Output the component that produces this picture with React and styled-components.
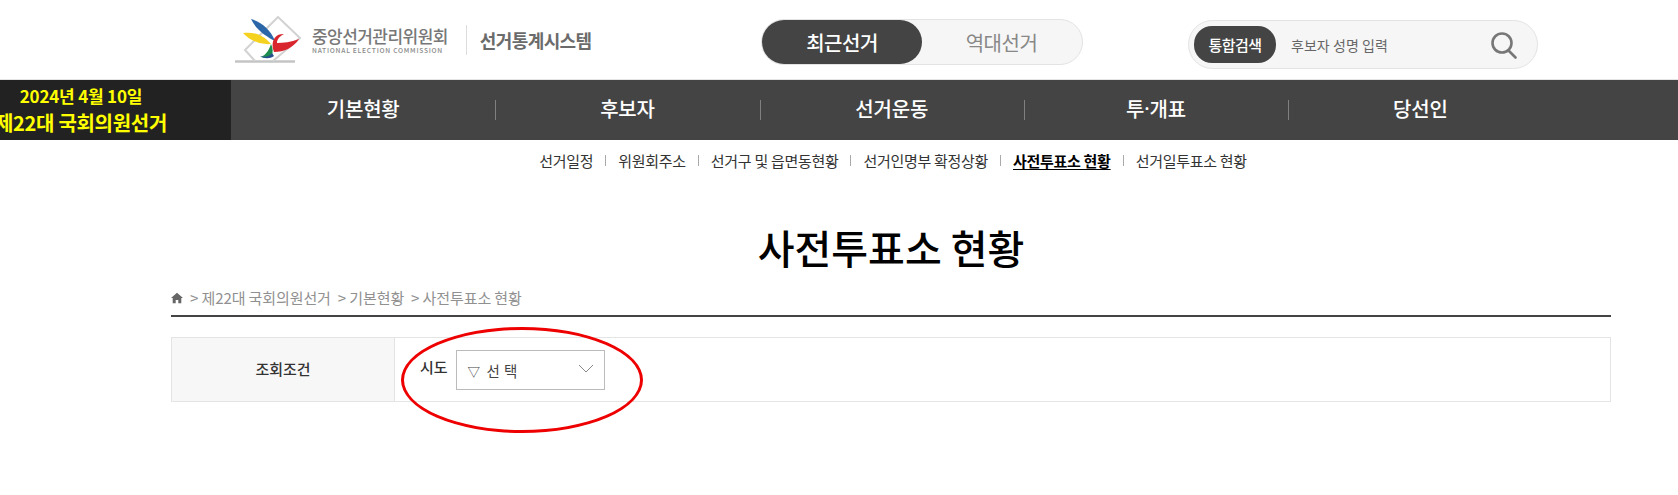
import React from "react";
import styled, { createGlobalStyle } from "styled-components";

const Global = createGlobalStyle`
  html, body { margin: 0; padding: 0; background: #fff; }
  body { font-family: "Noto Sans CJK KR", "Noto Sans", sans-serif; color: #222; overflow: hidden; }
  * { box-sizing: border-box; }
`;

const Page = styled.div`
  position: relative;
  width: 1678px;
  height: 495px;
  overflow: hidden;
`;

const Header = styled.header`
  height: 80px;
  display: flex;
  align-items: flex-start;
  padding-left: 235px;
  border-bottom: 1px solid #e4e4e4;
`;

const LogoBlock = styled.div`
  width: 527px;
  height: 79px;
  display: flex;
  align-items: center;
`;

const LogoNames = styled.div`
  display: flex;
  flex-direction: column;
  margin-left: 10px;
  padding-right: 18px;
  border-right: 1px solid #ddd;
  height: 30px;
  justify-content: center;
`;

const LogoKo = styled.div`
  font-size: 17px;
  line-height: 21px;
  font-weight: 500;
  letter-spacing: -0.55px;
  color: #777;
  white-space: nowrap;
`;

const LogoEn = styled.div`
  font-size: 6.7px;
  line-height: 9px;
  font-weight: 500;
  letter-spacing: 0.75px;
  color: #8a8a8a;
  white-space: nowrap;
`;

const SystemName = styled.div`
  margin-left: 13px;
  font-size: 18px;
  font-weight: 700;
  letter-spacing: -0.6px;
  color: #6b6b6b;
  white-space: nowrap;
`;

const Toggle = styled.div`
  margin-top: 19px;
  margin-left: -1px;
  width: 322px;
  height: 46px;
  display: flex;
  background: #f6f6f6;
  border: 1px solid #e3e3e3;
  border-radius: 23px;
`;

const ToggleItem = styled.div`
  width: ${(p) => (p.$active ? 160 : 159)}px;
  height: 44px;
  border-radius: 22px;
  display: flex;
  align-items: center;
  justify-content: center;
  font-size: 20px;
  font-weight: ${(p) => (p.$active ? 500 : 400)};
  letter-spacing: -0.5px;
  color: ${(p) => (p.$active ? "#fff" : "#888")};
  background: ${(p) => (p.$active ? "#444" : "transparent")};
`;

const Search = styled.div`
  margin-left: 105px;
  margin-top: 20px;
  width: 350px;
  height: 49px;
  display: flex;
  align-items: center;
  padding-left: 5px;
  background: #f6f6f6;
  border: 1px solid #e3e3e3;
  border-radius: 25px;
`;

const SearchTag = styled.div`
  width: 82px;
  height: 37px;
  margin-top: -1px;
  border-radius: 18px;
  background: #444;
  color: #fff;
  display: flex;
  align-items: center;
  justify-content: center;
  font-size: 15px;
  font-weight: 500;
  letter-spacing: -0.6px;
`;

const SearchHint = styled.div`
  margin-left: 15px;
  flex: 1;
  font-size: 14px;
  letter-spacing: 0.05px;
  color: #666;
`;

const SearchIcon = styled.svg`
  width: 28px;
  height: 28px;
  margin-right: 19px;
  display: block;
`;

const Nav = styled.nav`
  height: 60px;
  display: flex;
  background: #444;
`;

const Banner = styled.div`
  width: 231px;
  flex: none;
  background: #222;
  overflow: hidden;
  display: flex;
`;

const BannerInner = styled.div`
  width: 162px;
  flex: none;
  display: flex;
  flex-direction: column;
  align-items: center;
  justify-content: center;
  padding-bottom: 2px;
  color: #ff0;
  font-weight: 700;
  white-space: nowrap;
`;

const BannerDate = styled.div`
  font-size: 17px;
  line-height: 26px;
  letter-spacing: -0.2px;
`;

const BannerName = styled.div`
  font-size: 20px;
  line-height: 27px;
  letter-spacing: -0.3px;
`;

const NavItem = styled.div`
  position: relative;
  width: 264.3px;
  display: flex;
  align-items: center;
  justify-content: center;
  padding-bottom: 3px;
  color: #fff;
  font-size: 20px;
  font-weight: 500;
  letter-spacing: -0.2px;
  &:not(:last-child)::after {
    content: "";
    position: absolute;
    right: -1px;
    top: 20px;
    width: 1px;
    height: 20px;
    background: #808080;
  }
`;

const Middot = styled.span`
  font-family: "Noto Sans", sans-serif;
`;

const Container = styled.main`
  width: 1440px;
  margin-left: 171px;
`;

const SubNav = styled.ul`
  list-style: none;
  margin: 0;
  padding: 0 0 0 4px;
  height: 40px;
  display: flex;
  align-items: center;
  justify-content: center;
`;

const SubItem = styled.li`
  display: flex;
  align-items: center;
  font-size: 15px;
  letter-spacing: -0.3px;
  white-space: nowrap;
  color: #333;
  font-weight: ${(p) => (p.$active ? 700 : 400)};
  & > span {
    color: ${(p) => (p.$active ? "#000" : "#333")};
    text-decoration: ${(p) => (p.$active ? "underline" : "none")};
    text-underline-offset: 2px;
  }
  &:not(:last-child)::after {
    content: "";
    width: 1px;
    height: 11px;
    background: #aaa;
    margin: 0 12px;
  }
`;

const Title = styled.h1`
  margin: 36px 0 0;
  height: 62px;
  font-size: 40px;
  line-height: 62px;
  font-weight: 500;
  color: #000;
  text-align: center;
`;

const Crumbs = styled.div`
  height: 31px;
  margin-top: 8px;
  padding-top: 2px;
  display: flex;
  align-items: flex-start;
  font-size: 15px;
  line-height: 20px;
  color: #909090;
  letter-spacing: -0.1px;
  border-bottom: 2px solid #444;
`;

const HomeIcon = styled.svg`
  width: 12px;
  height: 12px;
  margin: 4px 7px 0 0;
  flex: none;
`;

const Crumb = styled.span`
  margin-right: 7px;
`;

const Filter = styled.div`
  margin-top: 20px;
  height: 65px;
  display: flex;
  border: 1px solid #e4e4e4;
`;

const FilterHead = styled.div`
  width: 223px;
  flex: none;
  background: #f7f7f7;
  border-right: 1px solid #e4e4e4;
  display: flex;
  align-items: center;
  justify-content: center;
  font-size: 15px;
  font-weight: 500;
  color: #333;
  padding-bottom: 2px;
`;

const FilterBody = styled.div`
  display: flex;
  align-items: flex-start;
  padding: 12px 0 0 25px;
`;

const FieldLabel = styled.label`
  font-size: 15px;
  font-weight: 500;
  color: #333;
  line-height: 34px;
  margin-right: 8px;
`;

const SelectBox = styled.div`
  width: 149px;
  height: 40px;
  border: 1px solid #bbb;
  display: flex;
  align-items: center;
  justify-content: space-between;
  padding: 0 9px 0 11px;
  font-size: 14.5px;
  color: #444;
  letter-spacing: 0.4px;
`;

const Triangle = styled.span`
  font-size: 12.5px;
  margin-right: 6px;
`;

const Chevron = styled.svg`
  width: 18px;
  height: 10px;
  margin-bottom: 3px;
`;

const Circle = styled.div`
  position: absolute;
  left: 401px;
  top: 327px;
  width: 242px;
  height: 106px;
  border: 3.5px solid #ee0000;
  border-radius: 50%;
  pointer-events: none;
`;

function Logo() {
  return (
    <svg width="67" height="47" viewBox="0 0 67 47" style={{ flex: "none" }}>
      <path d="M0 45.5h60" stroke="#c4c4c4" strokeWidth="2.4" />
      <path d="M20 45 10 34 43 1l22 21-27 23" fill="none" stroke="#d2d2d2" strokeWidth="2" />
      <path d="M16 3c10 3 19 10 24 22C32 21 21 14 16 3z" fill="#2a66a8" />
      <path d="M8 17c11-1 19 1 28 11-10 1-21-3-28-11z" fill="#f5d21f" />
      <path d="M36 28c2 4 2 8 1 11-3 2-7 3-11 2 5-2 8-7 10-13z" fill="#1d8c4f" />
      <path d="M25 40c5 2 10 0 12-3l2 3c-4 3-10 3-14 0z" fill="#27508f" />
      <path d="M39 36c-3-8-1-14 4-17 2-1 4-1 6-1-4 2-7 5-7 9 6 0 14-1 22-4-6 9-15 13-25 13z" fill="#d9252e" />
    </svg>
  );
}

export default function App() {
  return (
    <Page>
      <Global />
      <Header>
        <LogoBlock>
          <Logo />
          <LogoNames>
            <LogoKo>중앙선거관리위원회</LogoKo>
            <LogoEn>NATIONAL ELECTION COMMISSION</LogoEn>
          </LogoNames>
          <SystemName>선거통계시스템</SystemName>
        </LogoBlock>
        <Toggle>
          <ToggleItem $active>최근선거</ToggleItem>
          <ToggleItem>역대선거</ToggleItem>
        </Toggle>
        <Search>
          <SearchTag>통합검색</SearchTag>
          <SearchHint>후보자 성명 입력</SearchHint>
          <SearchIcon viewBox="0 0 28 28" fill="none" stroke="#777" strokeWidth="2.6">
            <circle cx="12" cy="12" r="9.5" />
            <path d="M18.5 19.5l7 7" strokeLinecap="round" />
          </SearchIcon>
        </Search>
      </Header>
      <Nav>
        <Banner>
          <BannerInner>
            <BannerDate>2024년 4월 10일</BannerDate>
            <BannerName>제22대 국회의원선거</BannerName>
          </BannerInner>
        </Banner>
        <NavItem>기본현황</NavItem>
        <NavItem>후보자</NavItem>
        <NavItem>선거운동</NavItem>
        <NavItem>투<Middot>·</Middot>개표</NavItem>
        <NavItem>당선인</NavItem>
      </Nav>
      <Container>
        <SubNav>
          {["선거일정", "위원회주소", "선거구 및 읍면동현황", "선거인명부 확정상황", "사전투표소 현황", "선거일투표소 현황"].map((t) => (
            <SubItem key={t} $active={t === "사전투표소 현황"}>
              <span>{t}</span>
            </SubItem>
          ))}
        </SubNav>
        <Title>사전투표소 현황</Title>
        <Crumbs>
          <HomeIcon viewBox="0 0 12 12">
            <path d="M6 .8 0 6h1.7v5.2h3V8h2.6v3.2h3V6H12z" fill="#666" />
          </HomeIcon>
          <Crumb>&gt; 제22대 국회의원선거</Crumb>
          <Crumb>&gt; 기본현황</Crumb>
          <Crumb>&gt; 사전투표소 현황</Crumb>
        </Crumbs>
        <Filter>
          <FilterHead>조회조건</FilterHead>
          <FilterBody>
            <FieldLabel>시도</FieldLabel>
            <SelectBox>
              <span><Triangle>▽</Triangle>선 택</span>
              <Chevron viewBox="0 0 18 10" fill="none" stroke="#888" strokeWidth="1">
                <path d="M2 1l7 7 7-7" />
              </Chevron>
            </SelectBox>
          </FilterBody>
        </Filter>
      </Container>
      <Circle />
    </Page>
  );
}
